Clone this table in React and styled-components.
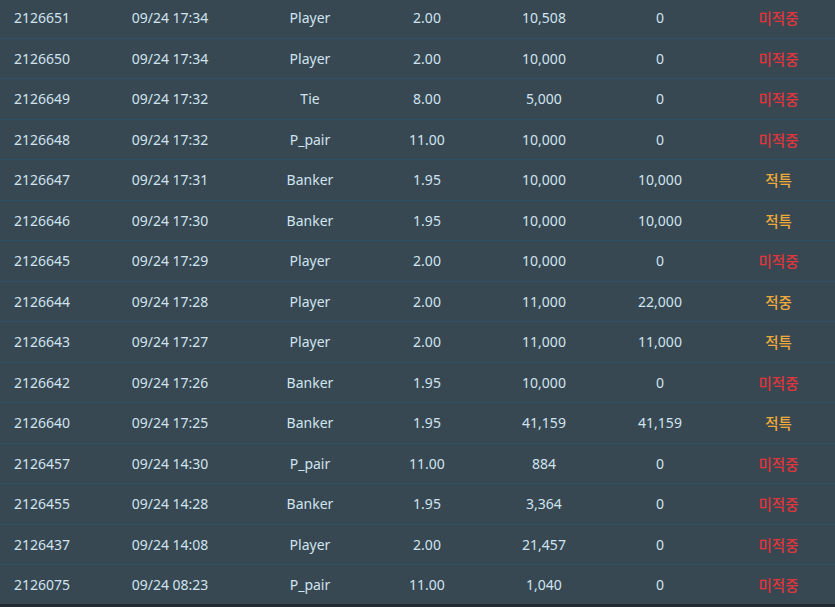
import React from "react";
import styled, { createGlobalStyle } from "styled-components";

const Global = createGlobalStyle`
  html, body { margin: 0; padding: 0; background: #222b30; }
  body { font-family: "Noto Sans", "Noto Sans CJK KR", sans-serif; overflow: hidden; }
`;

const Table = styled.div`
  width: 835px;
  height: 604px;
  background: #374852;
  overflow: hidden;
  display: flex;
  flex-direction: column;
`;

const Body = styled.div`
  margin-top: -2px;
  display: flex;
  flex-direction: column;
`;

const Row = styled.div`
  display: grid;
  grid-template-columns: 84px 172px 108px 126px 108px 124px 113px;
  height: 40.5px;
  box-sizing: border-box;
  border-bottom: 1px solid #2c5166;
  align-items: center;
  flex-shrink: 0;
`;

const Cell = styled.div`
  text-align: center;
  font-size: ${(p) => (p.$kr ? "14.5px" : "14px")};
  color: ${(p) => p.$color || "#d0e3ef"};
  font-family: ${(p) => (p.$kr ? '"Noto Sans CJK KR", "Noto Sans", sans-serif' : '"Noto Sans", sans-serif')};
  font-weight: ${(p) => (p.$kr ? 500 : 400)};
  white-space: nowrap;
`;

const statusColor = {
  "미적중": "#e0353c",
  "적특": "#eda93a",
  "적중": "#eda93a",
};

const data = [
  ["2126651", "09/24 17:34", "Player", "2.00", "10,508", "0", "미적중"],
  ["2126650", "09/24 17:34", "Player", "2.00", "10,000", "0", "미적중"],
  ["2126649", "09/24 17:32", "Tie", "8.00", "5,000", "0", "미적중"],
  ["2126648", "09/24 17:32", "P_pair", "11.00", "10,000", "0", "미적중"],
  ["2126647", "09/24 17:31", "Banker", "1.95", "10,000", "10,000", "적특"],
  ["2126646", "09/24 17:30", "Banker", "1.95", "10,000", "10,000", "적특"],
  ["2126645", "09/24 17:29", "Player", "2.00", "10,000", "0", "미적중"],
  ["2126644", "09/24 17:28", "Player", "2.00", "11,000", "22,000", "적중"],
  ["2126643", "09/24 17:27", "Player", "2.00", "11,000", "11,000", "적특"],
  ["2126642", "09/24 17:26", "Banker", "1.95", "10,000", "0", "미적중"],
  ["2126640", "09/24 17:25", "Banker", "1.95", "41,159", "41,159", "적특"],
  ["2126457", "09/24 14:30", "P_pair", "11.00", "884", "0", "미적중"],
  ["2126455", "09/24 14:28", "Banker", "1.95", "3,364", "0", "미적중"],
  ["2126437", "09/24 14:08", "Player", "2.00", "21,457", "0", "미적중"],
  ["2126075", "09/24 08:23", "P_pair", "11.00", "1,040", "0", "미적중"],
];

export default function App() {
  return (
    <>
      <Global />
      <Table>
        <Body>
          {data.map((r) => (
            <Row key={r[0]}>
              {r.slice(0, 6).map((c, i) => (
                <Cell key={i}>{c}</Cell>
              ))}
              <Cell $kr $color={statusColor[r[6]]}>{r[6]}</Cell>
            </Row>
          ))}
        </Body>
      </Table>
    </>
  );
}
